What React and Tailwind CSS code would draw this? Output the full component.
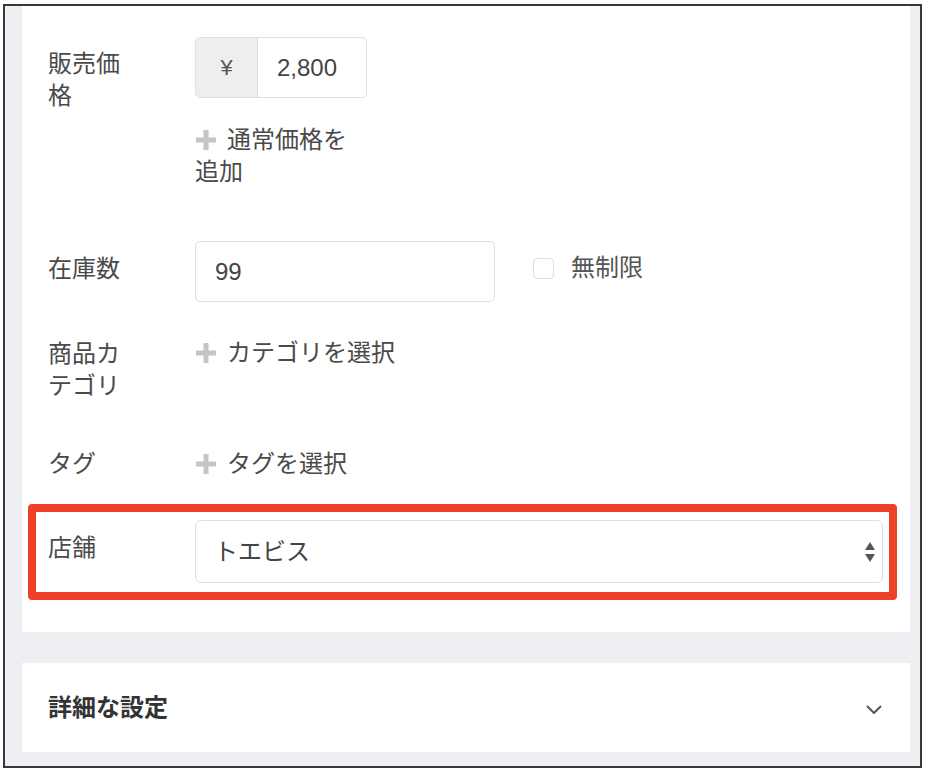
const font = "font-['Liberation_Sans','Noto_Sans_CJK_JP',sans-serif]";

const PlusIcon = () => (
  <svg width="22" height="22" viewBox="0 0 22 22" className="inline-block align-[-3px] mr-[10px]">
    <rect x="8.5" y="1" width="5" height="20" fill="#c5c5c5" />
    <rect x="1" y="8.5" width="20" height="5" fill="#c5c5c5" />
  </svg>
);

const Label = ({ children, pt = 'pt-0' }) => (
  <div className={`w-[147px] shrink-0 ${pt}`}>
    <div className="w-[84px] leading-[32px]">{children}</div>
  </div>
);

const App = () => {
  return (
    <div className={`w-[926px] h-[770px] bg-white pt-[4px] pl-[3px] ${font} text-[24px] text-[#4a4a4a]`}>
      <div className="w-[919px] h-[764px] border-2 border-[#383838] bg-[#eeeff3] pl-[17px] pr-[10px] overflow-hidden">
        {/* Main card */}
        <div className="bg-white pt-[31px] pb-[32px]">
          {/* 販売価格 */}
          <div className="flex items-start pl-[26px]">
            <Label pt="pt-[11px]">販売価格</Label>
            <div>
              <div className="flex h-[61px] w-[172px] border border-[#dcdfe3] rounded-[5px] overflow-hidden">
                <div className="w-[62px] bg-[#eeeeee] border-r border-[#dcdfe3] flex items-center justify-center text-[22px] text-[#555]">
                  ¥
                </div>
                <div className="flex-1 flex items-center pl-[19px] text-[#444]">2,800</div>
              </div>
              <div className="mt-[26px] w-[172px] leading-[32px]">
                <PlusIcon />
                通常価格を追加
              </div>
            </div>
          </div>

          {/* 在庫数 */}
          <div className="flex items-start pl-[26px] mt-[53px]">
            <Label pt="pt-[12px]">在庫数</Label>
            <div className="w-[300px] h-[61px] border border-[#dcdfe3] rounded-[5px] flex items-center pl-[19px] text-[#444]">
              99
            </div>
            <div className="flex items-center ml-[38px] mt-[11px] h-[32px]">
              <div className="w-[21px] h-[21px] border-[1.5px] border-[#dddddd] rounded-[4px]" />
              <span className="ml-[17px] text-[#555]">無制限</span>
            </div>
          </div>

          {/* 商品カテゴリ */}
          <div className="flex items-start pl-[26px] mt-[36px]">
            <Label>商品カテゴリ</Label>
            <div className="leading-[30px]">
              <PlusIcon />
              カテゴリを選択
            </div>
          </div>

          {/* タグ */}
          <div className="flex items-start pl-[26px] mt-[46px]">
            <Label>タグ</Label>
            <div className="leading-[32px]">
              <PlusIcon />
              タグを選択
            </div>
          </div>

          {/* 店舗 */}
          <div className="mt-[24px] ml-[6px] mr-[13px] border-[8px] border-[#ee4129] rounded-[4px] pl-[12px] pr-[6px] pt-[8px] pb-[9px] flex items-start">
            <Label pt="pt-[12px]">店舗</Label>
            <div className="flex-1 h-[63px] border border-[#dcdfe3] rounded-[6px] flex items-center justify-between pl-[18px] pr-[6px] text-[#444]">
              <span>トエビス</span>
              <svg width="12" height="22" viewBox="0 0 12 22">
                <path d="M6 1 L11 9 L1 9 Z" fill="#555" />
                <path d="M6 21 L11 13 L1 13 Z" fill="#555" />
              </svg>
            </div>
          </div>
        </div>

        {/* 詳細な設定 */}
        <div className="bg-white mt-[31px] h-[89px] flex items-center justify-between pl-[26px] pr-[28px]">
          <span className="font-bold text-[#333]">詳細な設定</span>
          <svg width="16" height="10" viewBox="0 0 16 10" className="mt-[4px]">
            <path d="M1.5 1.5 L8 8 L14.5 1.5" fill="none" stroke="#555" strokeWidth="2" strokeLinecap="round" strokeLinejoin="round" />
          </svg>
        </div>
      </div>
    </div>
  );
};

export default App;
